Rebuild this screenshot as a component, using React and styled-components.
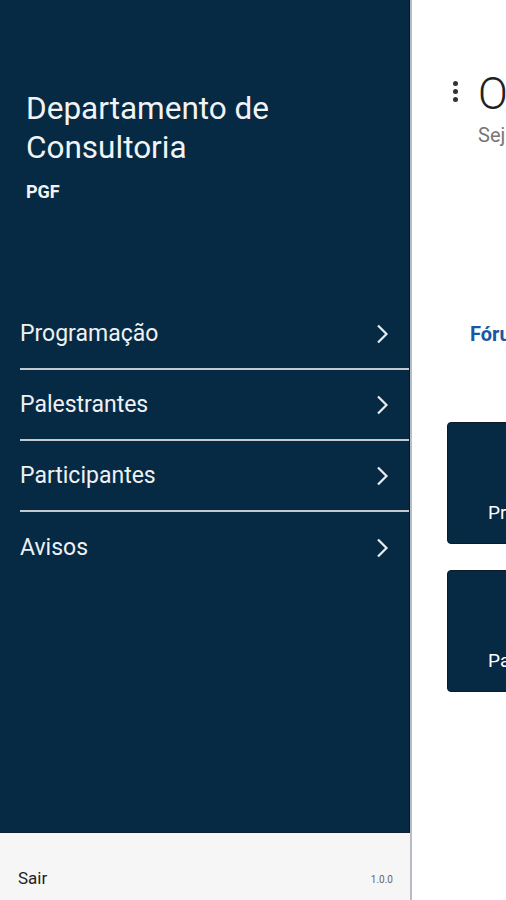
import React from "react";
import styled, { createGlobalStyle } from "styled-components";

const Global = createGlobalStyle`
  html, body { margin: 0; padding: 0; background: #ffffff; }
  body { font-family: Roboto, "Noto Sans", "Liberation Sans", sans-serif; }
  * { box-sizing: border-box; }
`;

const Screen = styled.div`
  display: flex;
  width: 506px;
  height: 900px;
  overflow: hidden;
  background: #ffffff;
`;

const Drawer = styled.aside`
  flex: 0 0 412px;
  display: flex;
  flex-direction: column;
  border-right: 2px solid #b9bcc4;
`;

const DrawerBody = styled.div`
  flex: 1;
  display: flex;
  flex-direction: column;
  background: #062a43;
  border-right: 1px solid #021628;
  padding-top: 89px;
`;

const Header = styled.div`
  padding: 0 0 0 26px;
`;

const Title = styled.h1`
  margin: 0;
  font-weight: 400;
  font-size: 31.5px;
  line-height: 39px;
  color: #f1f3f5;
`;

const Subtitle = styled.div`
  margin-top: 14px;
  font-weight: 700;
  font-size: 18px;
  color: #f1f3f5;
`;

const Menu = styled.nav`
  margin-top: 97px;
  display: flex;
  flex-direction: column;
  padding-left: 20px;
`;

const Item = styled.div`
  display: flex;
  align-items: center;
  justify-content: space-between;
  height: 71px;
  padding-right: 20px;
  border-bottom: ${(p) => (p.$last ? "none" : "2px solid #c3c9d1")};
  color: #eef1f4;
  font-size: 23px;
`;

const Footer = styled.div`
  flex: 0 0 68px;
  display: flex;
  align-items: flex-end;
  justify-content: space-between;
  padding: 0 17px 12px 18px;
  background: #f6f6f6;
  border-top: 1px solid #10202f;
`;

const Sair = styled.span`
  font-size: 17px;
  color: #222;
`;

const Version = styled.span`
  font-size: 10px;
  color: #666;
  padding-bottom: 3px;
`;

const Main = styled.main`
  flex: 1;
  min-width: 0;
  overflow: hidden;
  background: #ffffff;
  padding: 68px 0 0 41px;
  white-space: nowrap;
`;

const TopRow = styled.div`
  display: flex;
  align-items: flex-start;
  gap: 20px;
`;

const Dots = styled.div`
  display: flex;
  flex-direction: column;
  gap: 3px;
  padding-top: 13px;
  span {
    width: 5px;
    height: 5px;
    border-radius: 50%;
    background: #333;
  }
`;

const Greeting = styled.div`
  display: flex;
  flex-direction: column;
`;

const Hello = styled.div`
  font-size: 44px;
  font-weight: 300;
  line-height: 52px;
  color: #222;
`;

const Welcome = styled.div`
  margin-top: 2px;
  font-size: 20px;
  color: #777;
  line-height: 26px;
`;

const Tab = styled.div`
  margin: 174px 0 0 17px;
  font-size: 20px;
  font-weight: 700;
  color: #1757a3;
`;

const Cards = styled.div`
  margin: 76px 0 0 -6px;
  display: flex;
  flex-direction: column;
  gap: 26px;
`;

const Card = styled.div`
  width: 150px;
  height: 122px;
  border-radius: 4px;
  background: #062a43;
  border: 1px solid #0d1a26;
  display: flex;
  align-items: flex-end;
  padding: 0 0 19px 40px;
  color: #ffffff;
  font-size: 19px;
`;

const Chevron = () => (
  <svg width="14" height="22" viewBox="0 0 14 22" fill="none">
    <path d="M3 2.5 L11.5 11 L3 19.5" stroke="#e8ecf0" strokeWidth="2.2" />
  </svg>
);

const items = ["Programação", "Palestrantes", "Participantes", "Avisos"];

export default function App() {
  return (
    <>
      <Global />
      <Screen>
        <Drawer>
          <DrawerBody>
            <Header>
              <Title>
                Departamento de
                <br />
                Consultoria
              </Title>
              <Subtitle>PGF</Subtitle>
            </Header>
            <Menu>
              {items.map((t, i) => (
                <Item key={t} $last={i === items.length - 1}>
                  <span>{t}</span>
                  <Chevron />
                </Item>
              ))}
            </Menu>
          </DrawerBody>
          <Footer>
            <Sair>Sair</Sair>
            <Version>1.0.0</Version>
          </Footer>
        </Drawer>
        <Main>
          <TopRow>
            <Dots>
              <span />
              <span />
              <span />
            </Dots>
            <Greeting>
              <Hello>Olá</Hello>
              <Welcome>Seja bem-vindo</Welcome>
            </Greeting>
          </TopRow>
          <Tab>Fórum</Tab>
          <Cards>
            <Card>Programação</Card>
            <Card>Palestrantes</Card>
          </Cards>
        </Main>
      </Screen>
    </>
  );
}
